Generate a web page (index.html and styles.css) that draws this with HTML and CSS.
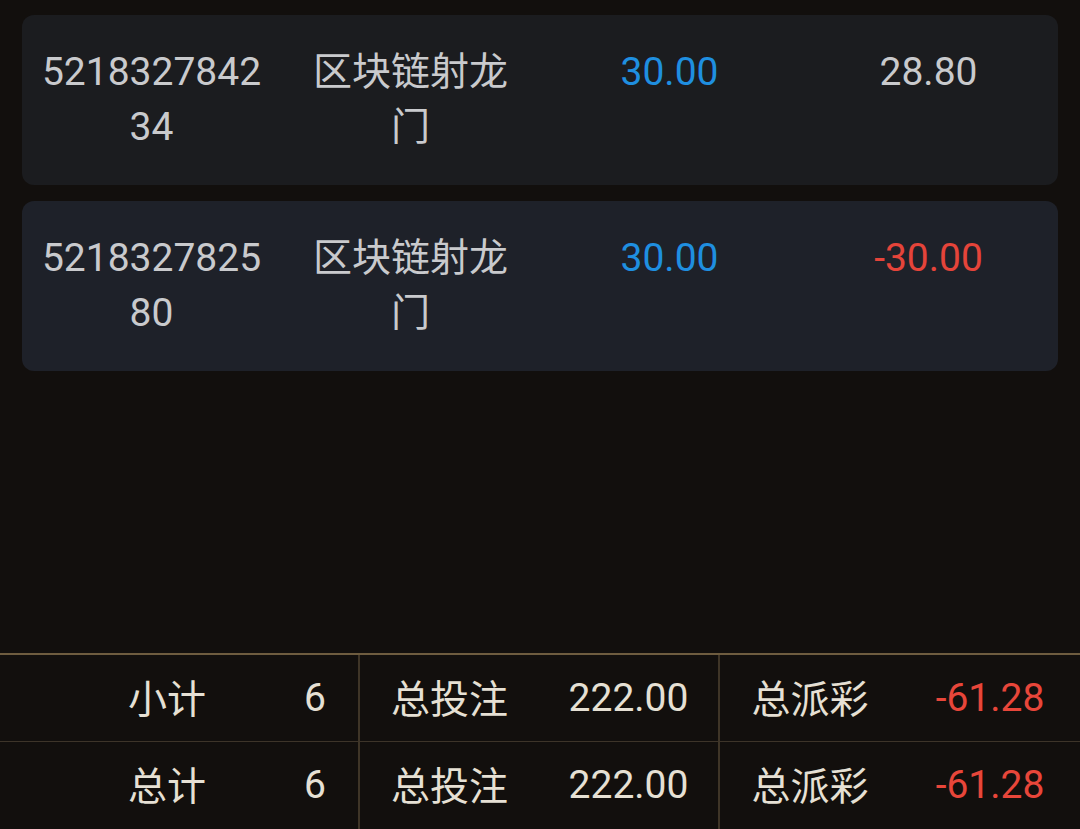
FILE: index.html
```html
<!DOCTYPE html>
<html lang="zh-CN">
<head>
    <meta charset="UTF-8">
    <meta name="viewport" content="width=device-width, initial-scale=1.0">
    <title>投注记录</title>
    <link rel="stylesheet" href="styles.css">
</head>
<body>
    <div class="page">
        <div class="record-list">
            <div class="record-card">
                <div class="cell">521832784234</div>
                <div class="cell">区块链射龙门</div>
                <div class="cell amount-bet">30.00</div>
                <div class="cell">28.80</div>
            </div>
            <div class="record-card alt">
                <div class="cell">521832782580</div>
                <div class="cell">区块链射龙门</div>
                <div class="cell amount-bet">30.00</div>
                <div class="cell amount-loss">-30.00</div>
            </div>
        </div>

        <div class="summary">
            <div class="summary-row">
                <div class="group first">
                    <span class="label">小计</span>
                    <span class="value">6</span>
                </div>
                <div class="group">
                    <span class="label">总投注</span>
                    <span class="value">222.00</span>
                </div>
                <div class="group">
                    <span class="label">总派彩</span>
                    <span class="value loss">-61.28</span>
                </div>
            </div>
            <div class="summary-row">
                <div class="group first">
                    <span class="label">总计</span>
                    <span class="value">6</span>
                </div>
                <div class="group">
                    <span class="label">总投注</span>
                    <span class="value">222.00</span>
                </div>
                <div class="group">
                    <span class="label">总派彩</span>
                    <span class="value loss">-61.28</span>
                </div>
            </div>
        </div>
    </div>
</body>
</html>
```

FILE: styles.css
```css
* {
    margin: 0;
    padding: 0;
    box-sizing: border-box;
}

body {
    font-family: Roboto, "Noto Sans CJK SC", sans-serif;
    background: #120f0d;
    color: #c9cacd;
    font-size: 39px;
}

.page {
    min-height: 100vh;
    display: flex;
    flex-direction: column;
}

.record-list {
    padding: 15px 22px 0;
    display: flex;
    flex-direction: column;
    gap: 16px;
}

.record-card {
    display: grid;
    grid-template-columns: repeat(4, 1fr);
    background: #1b1c1f;
    border-radius: 12px;
    padding: 30px 0;
}

.record-card.alt {
    background: #1e2129;
}

.cell {
    padding: 0 17px;
    text-align: center;
    line-height: 55px;
    word-break: break-all;
}

.amount-bet {
    color: #1f8fe0;
}

.amount-loss {
    color: #e5443a;
}

.summary {
    margin-top: auto;
    border-top: 2px solid #6e5c3f;
    color: #e6e0d4;
}

.summary-row {
    display: grid;
    grid-template-columns: 358px 360px 1fr;
    height: 87px;
}

.summary-row:first-child {
    border-bottom: 1px solid #3d3429;
}

.group {
    display: grid;
    grid-template-columns: 1fr 1fr;
    align-items: center;
    text-align: center;
    line-height: 1;
    border-left: 2px solid #3f3527;
}

.group.first {
    border-left: none;
    grid-template-columns: 206px 1fr;
}

.group.first .label {
    text-align: right;
}

.group.first .value {
    text-align: right;
    padding-right: 32px;
}

.label {
    font-family: "Noto Sans CJK SC", sans-serif;
    padding-bottom: 4px;
}

.value.loss {
    color: #e8463a;
}
```
